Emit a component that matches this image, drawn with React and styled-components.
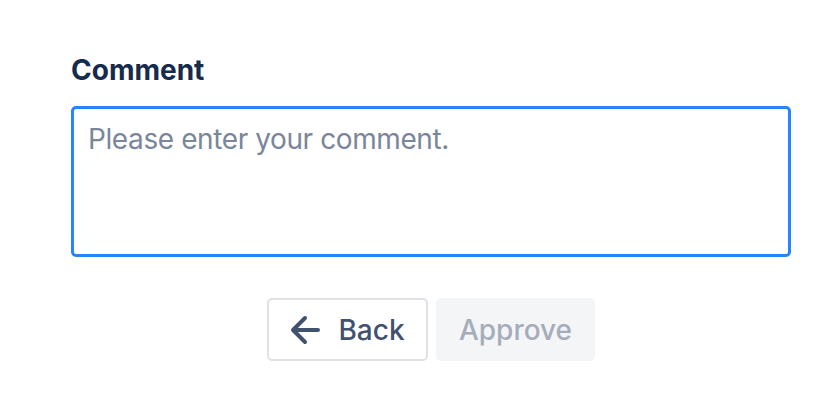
import React from 'react';
import styled, { createGlobalStyle } from 'styled-components';

const GlobalStyle = createGlobalStyle`
	body {
		margin: 0;
		background: #fff;
		font-family: Inter, "Noto Sans", sans-serif;
	}
`;

const Page = styled.div`
	width: 720px;
	padding: 50px 0 0 71px;
`;

const Label = styled.label`
	display: block;
	font-size: 28px;
	font-weight: 700;
	line-height: 40px;
	color: #172b4d;
	margin-bottom: 16px;
`;

const TextArea = styled.textarea`
	box-sizing: border-box;
	display: block;
	width: 720px;
	height: 151px;
	margin: 0;
	padding: 10px 14px;
	border: 3px solid #2684ff;
	border-radius: 5px;
	font-family: Inter, "Noto Sans", sans-serif;
	font-size: 28px;
	line-height: 40px;
	letter-spacing: -0.4px;
	color: #172b4d;
	resize: none;
	outline: none;
	&::placeholder {
		color: #7a869a;
	}
`;

const Actions = styled.div`
	display: flex;
	justify-content: center;
	gap: 8px;
	margin-top: 41px;
`;

const Button = styled.button`
	box-sizing: border-box;
	display: flex;
	align-items: center;
	justify-content: center;
	gap: 18px;
	height: 63px;
	padding: 0;
	border: ${(p) => (p.$outline ? '2px solid #dfe1e6' : 'none')};
	border-radius: 5px;
	background: ${(p) => (p.$outline ? '#fff' : '#f4f5f7')};
	color: ${(p) => (p.$outline ? '#42526e' : '#a5adba')};
	font-family: Inter, "Noto Sans", sans-serif;
	font-size: 28px;
	font-weight: 500;
	cursor: ${(p) => (p.disabled ? 'not-allowed' : 'pointer')};
`;

const ArrowLeft = () => (
	<svg width="30" height="30" viewBox="0 0 30 30" fill="none">
		<path d="M28 15H3M15 3L3 15L15 27" stroke="#42526e" strokeWidth="4" strokeLinecap="round" strokeLinejoin="round" />
	</svg>
);

export default function App() {
	return (
		<>
			<GlobalStyle />
			<Page>
				<Label htmlFor="comment">Comment</Label>
				<TextArea id="comment" placeholder="Please enter your comment." />
				<Actions>
					<Button $outline style={{ width: 161 }}>
						<ArrowLeft />
						Back
					</Button>
					<Button disabled style={{ width: 159 }}>Approve</Button>
				</Actions>
			</Page>
		</>
	);
}
